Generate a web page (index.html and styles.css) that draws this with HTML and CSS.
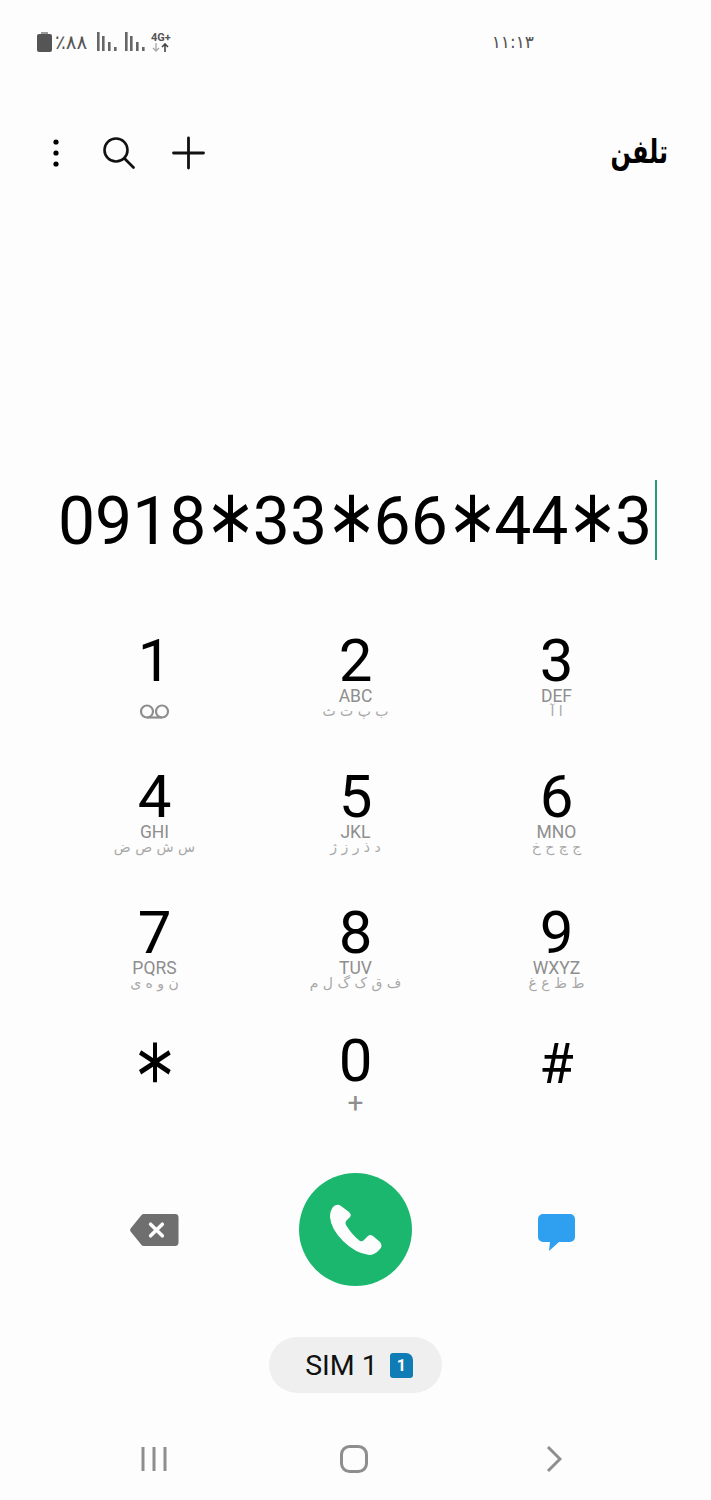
FILE: index.html
```html
<!DOCTYPE html>
<html lang="fa">
<head>
  <meta charset="UTF-8" />
  <meta name="viewport" content="width=device-width, initial-scale=1.0"/>
  <title>تلفن</title>
  <link rel="stylesheet" href="styles.css">
</head>
<body>
  <div class="status">
    <svg class="battery" width="15" height="20" viewBox="0 0 15 20"><path d="M4 0h7v3H4z" fill="#9a9a9a"/><rect y="2" width="15" height="18" rx="2" fill="#555"/></svg>
    <span class="percent">٪۸۸</span>
    <svg class="signal" width="21" height="20" viewBox="0 0 21 20"><path d="M0 0h2.6v19H0zM5 4h2.6v15H5zM11 10h2.6v9H11zM17 15h2.6v4H17z" fill="#666"/></svg>
    <svg class="signal" width="21" height="20" viewBox="0 0 21 20"><path d="M0 0h2.6v19H0zM5 4h2.6v15H5zM11 10h2.6v9H11zM17 15h2.6v4H17z" fill="#666"/></svg>
    <div class="net">
      <span>4G+</span>
      <svg width="18" height="9" viewBox="0 0 18 9"><path d="M5 0v8M2 5l3 3 3-3" fill="none" stroke="#aaa" stroke-width="1.4"/><path d="M14 9V1M11 4l3-3 3 3" fill="none" stroke="#444" stroke-width="1.6"/></svg>
    </div>
    <span class="clock">۱۱:۱۳</span>
  </div>

  <div class="header">
    <svg class="dots" width="14" height="30" viewBox="0 0 14 30"><circle cx="7" cy="4" r="2.6"/><circle cx="7" cy="15" r="2.6"/><circle cx="7" cy="26" r="2.6"/></svg>
    <svg class="search" width="34" height="34" viewBox="0 0 34 34"><circle cx="14" cy="14" r="11.5" fill="none" stroke="#111" stroke-width="2.6"/><path d="M22.5 22.5l9 9" stroke="#111" stroke-width="2.8" stroke-linecap="round"/></svg>
    <svg class="plus" width="34" height="34" viewBox="0 0 34 34"><path d="M16.500 2v30M1.500 17h30" stroke="#111" stroke-width="2.8" stroke-linecap="round"/></svg>
    <h1 class="title">تلفن</h1>
  </div>

  <div class="number">
    <span>0918</span><span class="star">⚹</span><span>33</span><span class="star">⚹</span><span>66</span><span class="star">⚹</span><span>44</span><span class="star">⚹</span><span>3</span><i class="cursor"></i>
  </div>

  <div class="keypad">
    <div class="key">
      <div class="digit">1</div>
      <svg class="voicemail" width="31" height="15" viewBox="0 0 31 15"><circle cx="8" cy="7.500" r="6" fill="none" stroke="#8e8e8e" stroke-width="2.200"/><circle cx="23" cy="7.500" r="6" fill="none" stroke="#8e8e8e" stroke-width="2.200"/><path d="M8 13.500h15" stroke="#8e8e8e" stroke-width="2.200"/></svg>
    </div>
    <div class="key"><div class="digit">2</div><div class="latin">ABC</div><div class="farsi">ب پ ت ث</div></div>
    <div class="key"><div class="digit">3</div><div class="latin">DEF</div><div class="farsi">ا آ</div></div>
    <div class="key"><div class="digit">4</div><div class="latin">GHI</div><div class="farsi">س ش ص ض</div></div>
    <div class="key"><div class="digit">5</div><div class="latin">JKL</div><div class="farsi">د ذ ر ز ژ</div></div>
    <div class="key"><div class="digit">6</div><div class="latin">MNO</div><div class="farsi">ج چ ح خ</div></div>
    <div class="key key-short"><div class="digit">7</div><div class="latin">PQRS</div><div class="farsi">ن و ه ی</div></div>
    <div class="key key-short"><div class="digit">8</div><div class="latin">TUV</div><div class="farsi">ف ق ک گ ل م</div></div>
    <div class="key key-short"><div class="digit">9</div><div class="latin">WXYZ</div><div class="farsi">ط ظ ع غ</div></div>
    <div class="key key-last"><div class="digit"><span class="star star-key">⚹</span></div></div>
    <div class="key key-last"><div class="digit">0</div><div class="plus-sign">+</div></div>
    <div class="key key-last"><div class="digit digit-hash">#</div></div>
  </div>

  <div class="actions">
    <svg class="backspace" width="49" height="32" viewBox="0 0 50 33" preserveAspectRatio="none"><path d="M14 0h32a3.500 3.500 0 0 1 3.500 3.500v26a3.500 3.500 0 0 1-3.500 3.500H14a3 3 0 0 1-2.200-1L1 18.500a3 3 0 0 1 0-4L11.800 1A3 3 0 0 1 14 0z" fill="#6f6f6f"/><path d="M21 10.500l12 12M33 10.500l-12 12" stroke="#fff" stroke-width="3.600" stroke-linecap="round"/></svg>
    <div class="call">
      <svg width="54" height="54" viewBox="0 0 54 54"><path d="M4 4Q8 0 12 3L20 9Q23 12 21 14L17 18Q16 20 17 22Q23 32 31 38Q33 39 35 37L39 33Q41 31 44 33L51 39Q54 43 51 46Q46 52 40 52Q26 50 14 38Q2 26 1 14Q1 8 4 4Z" fill="#fdfdfd"/></svg>
    </div>
    <svg class="message" width="37" height="38" viewBox="0 0 37 38"><path d="M5 0h27a5 5 0 0 1 5 5v18a5 5 0 0 1-5 5H21l-10 9 1-9H5a5 5 0 0 1-5-5V5a5 5 0 0 1 5-5z" fill="#2f9ff0"/></svg>
  </div>

  <div class="sim">
    <span>SIM 1</span>
    <span class="sim-card">1</span>
  </div>

  <div class="nav">
    <svg width="26" height="26" viewBox="0 0 26 26"><path d="M2 1v24M13 1v24M24 1v24" stroke="#8e8e8e" stroke-width="3"/></svg>
    <svg width="28" height="28" viewBox="0 0 28 28"><rect x="1.500" y="1.500" width="25" height="25" rx="8" fill="none" stroke="#8e8e8e" stroke-width="3"/></svg>
    <svg width="16" height="28" viewBox="0 0 16 28"><path d="M2 2l12 12L2 26" fill="none" stroke="#8e8e8e" stroke-width="3"/></svg>
  </div>
</body>
</html>
```

FILE: styles.css
```css
body {
  margin: 0;
  height: 1500px;
  overflow: hidden;
  background-color: #fdfdfd;
  color: #000;
  font-family: Roboto, "DejaVu Sans", sans-serif;
}
svg {
  display: block;
}

/* status bar */
.status {
  display: flex;
  align-items: center;
  height: 84px;
  padding: 0 177px 0 37px;
  box-sizing: border-box;
  color: #555;
}
.percent {
  width: 42px;
  margin-left: 3px;
  font-family: "DejaVu Sans", sans-serif;
  font-size: 20px;
}
.signal {
  margin-right: 7px;
}
.net {
  margin-left: -2px;
  font-size: 11px;
  font-weight: 700;
  line-height: 10px;
}
.clock {
  margin: 0 0 0 auto;
  font-family: "DejaVu Sans", sans-serif;
  font-size: 17px;
}

/* title row */
.header {
  display: flex;
  align-items: center;
  height: 138px;
  padding: 0 44px 0 49px;
}
.dots {
  margin-right: 39px;
}
.search {
  margin-right: 36px;
}
.title {
  margin: -4px -1px 0 auto;
  font-family: "DejaVu Sans", sans-serif;
  font-size: 30px;
  font-weight: 700;
  transform: scale(.8, 1.1);
  transform-origin: right center;
}

/* dialed number */
.number {
  display: flex;
  justify-content: center;
  align-items: flex-start;
  height: 80px;
  margin-top: 258px;
  padding: 0 0 0 4px;
  font-size: 66px;
  line-height: 84px;
}
.star {
  display: inline-block;
  width: 46.500px;
  text-align: center;
  font-family: "DejaVu Sans", sans-serif;
  font-size: 58px;
  transform: translate(8px, -4px) rotate(90deg) scale(1.45, 1.15);
}
.cursor {
  width: 2px;
  height: 80px;
  margin-left: 3px;
  background-color: #2a9d6e;
}

/* keypad */
.keypad {
  display: grid;
  grid-template-columns: repeat(3, 201px);
  width: 603px;
  margin: 78px auto 0;
}
.key {
  display: flex;
  flex-direction: column;
  align-items: center;
  height: 136px;
}
.key-short {
  height: 128px;
}
.key-last {
  height: 135px;
}
.digit {
  font-size: 60px;
  line-height: 46px;
}
.digit-hash {
  margin-top: 3px;
  font-size: 56px;
}
.star-key {
  width: 40px;
  font-size: 50px;
  transform: translate(6px, -2px) rotate(90deg) scale(1.42, 1.22);
}
.latin {
  margin-top: 4px;
  font-size: 17.500px;
  line-height: 16px;
  color: #8e8e8e;
}
.farsi {
  font-family: "DejaVu Sans", sans-serif;
  font-size: 14px;
  line-height: 15px;
  color: #a8a8a8;
}
.voicemail {
  margin-top: 20px;
}
.plus-sign {
  margin-top: 4px;
  font-size: 28px;
  line-height: 30px;
  color: #8e8e8e;
}

/* call row */
.actions {
  display: grid;
  grid-template-columns: repeat(3, 201px);
  justify-content: center;
  justify-items: center;
  align-items: center;
  height: 113px;
}
.call {
  display: flex;
  align-items: center;
  justify-content: center;
  width: 113px;
  height: 113px;
  border-radius: 50%;
  background-color: #1cb76e;
}
.message {
  margin-top: 6px;
}

/* sim chooser */
.sim {
  display: flex;
  align-items: center;
  justify-content: center;
  gap: 12px;
  width: 173px;
  height: 56px;
  margin: 51px auto 0;
  padding-left: 7px;
  box-sizing: border-box;
  border-radius: 28px;
  background-color: #efefef;
  font-size: 28.500px;
  color: #111;
}
.sim-card {
  width: 23px;
  height: 25px;
  border-radius: 3px 7px 3px 3px;
  background-color: #0f7cb5;
  color: #fff;
  font-size: 16px;
  font-weight: 700;
  line-height: 25px;
  text-align: center;
}

/* android nav */
.nav {
  display: grid;
  grid-template-columns: repeat(3, 200px);
  justify-content: center;
  justify-items: center;
  align-items: center;
  height: 52px;
  margin-top: 40px;
  padding-right: 3px;
}
```
